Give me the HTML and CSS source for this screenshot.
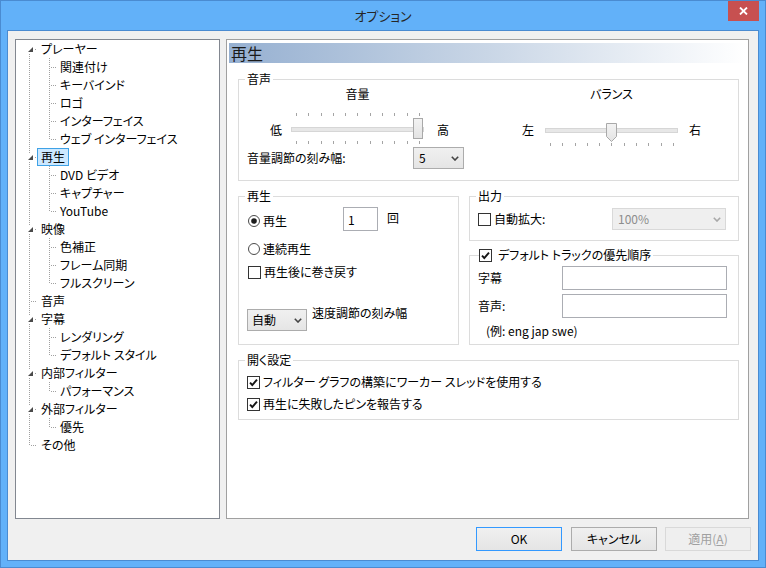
FILE: index.html
```html
<!DOCTYPE html>
<html lang="ja">
<head>
<meta charset="utf-8">
<title>オプション</title>
<link rel="stylesheet" href="styles.css">
</head>
<body>
<div class="window">
  <div class="titlebar">
    <span></span>
    <span class="title">オプション</span>
    <div class="close"><svg width="9" height="8" viewBox="0 0 9 8"><path d="M1 0.5 L8 7.5 M8 0.5 L1 7.5" stroke="#fff" stroke-width="1.8" fill="none"/></svg></div>
  </div>
  <div class="client">
    <div class="main">
      <div class="tree">
        <div class="row"><span class="g1 exp first"><i class="tri"></i></span><span class="lbl">プレーヤー</span></div>
        <div class="row"><span class="g1 v"></span><span class="g2 cmid"></span><span class="lbl">関連付け</span></div>
        <div class="row"><span class="g1 v"></span><span class="g2 cmid"></span><span class="lbl">キーバインド</span></div>
        <div class="row"><span class="g1 v"></span><span class="g2 cmid"></span><span class="lbl">ロゴ</span></div>
        <div class="row"><span class="g1 v"></span><span class="g2 cmid"></span><span class="lbl">インターフェイス</span></div>
        <div class="row"><span class="g1 v"></span><span class="g2 cend"></span><span class="lbl">ウェブ インターフェイス</span></div>
        <div class="row"><span class="g1 exp"><i class="tri"></i></span><span class="lbl sel">再生</span></div>
        <div class="row"><span class="g1 v"></span><span class="g2 cmid"></span><span class="lbl">DVD ビデオ</span></div>
        <div class="row"><span class="g1 v"></span><span class="g2 cmid"></span><span class="lbl">キャプチャー</span></div>
        <div class="row"><span class="g1 v"></span><span class="g2 cend"></span><span class="lbl">YouTube</span></div>
        <div class="row"><span class="g1 exp"><i class="tri"></i></span><span class="lbl">映像</span></div>
        <div class="row"><span class="g1 v"></span><span class="g2 cmid"></span><span class="lbl">色補正</span></div>
        <div class="row"><span class="g1 v"></span><span class="g2 cmid"></span><span class="lbl">フレーム同期</span></div>
        <div class="row"><span class="g1 v"></span><span class="g2 cend"></span><span class="lbl">フルスクリーン</span></div>
        <div class="row"><span class="g1 leaf"></span><span class="lbl">音声</span></div>
        <div class="row"><span class="g1 exp"><i class="tri"></i></span><span class="lbl">字幕</span></div>
        <div class="row"><span class="g1 v"></span><span class="g2 cmid"></span><span class="lbl">レンダリング</span></div>
        <div class="row"><span class="g1 v"></span><span class="g2 cend"></span><span class="lbl">デフォルト スタイル</span></div>
        <div class="row"><span class="g1 exp"><i class="tri"></i></span><span class="lbl">内部フィルター</span></div>
        <div class="row"><span class="g1 v"></span><span class="g2 cend"></span><span class="lbl">パフォーマンス</span></div>
        <div class="row"><span class="g1 exp"><i class="tri"></i></span><span class="lbl">外部フィルター</span></div>
        <div class="row"><span class="g1 v"></span><span class="g2 cend"></span><span class="lbl">優先</span></div>
        <div class="row"><span class="g1 lastleaf"></span><span class="lbl">その他</span></div>
      </div>

      <div class="page">
        <div class="page-head">再生</div>

        <fieldset class="grp audio">
          <legend>音声</legend>
          <div class="sliders">
            <div class="sgroup vol">
              <div class="stitle">音量</div>
              <div class="send lo">低</div>
              <div class="slider">
                <div class="ticks"><i></i><i></i><i></i><i></i><i></i><i></i><i></i><i></i><i></i><i></i><i></i></div>
                <div class="area"><div class="strack"></div><div class="thumb" style="left:122px"></div></div>
                <div class="ticks"><i></i><i></i><i></i><i></i><i></i><i></i><i></i><i></i><i></i><i></i><i></i></div>
              </div>
              <div class="send hi">高</div>
            </div>
            <div class="sgroup bal">
              <div class="stitle">バランス</div>
              <div class="send lo">左</div>
              <div class="slider bslider">
                <div class="area barea"><div class="strack"></div><svg class="pthumb" style="left:61px" width="11" height="19" viewBox="0 0 11 19"><defs><linearGradient id="tg" x1="0" y1="0" x2="0" y2="1"><stop offset="0" stop-color="#f3f3f3"/><stop offset="1" stop-color="#e3e3e3"/></linearGradient></defs><path d="M0.5 0.5 H10.5 V13.5 L5.5 18.5 L0.5 13.5 Z" fill="url(#tg)" stroke="#a9a9a9"/></svg></div>
                <div class="ticks"><i></i><i></i><i></i><i></i><i></i><i></i><i></i><i></i><i></i><i></i><i></i></div>
              </div>
              <div class="send hi">右</div>
            </div>
          </div>
          <div class="step-row">
            <span class="step-label">音量調節の刻み幅:</span>
            <div class="combo step"><span>5</span><svg width="8" height="5" viewBox="0 0 8 5"><path d="M0.8 0.8 L4 4 L7.2 0.8" stroke="#444" stroke-width="1.6" fill="none"/></svg></div>
          </div>
        </fieldset>

        <div class="midgrid">
          <fieldset class="grp play">
            <legend>再生</legend>
            <div class="p-row1">
              <span class="opt radio-first"><svg width="12" height="12" viewBox="0 0 12 12"><circle cx="6" cy="6" r="5.5" fill="#fff" stroke="#4a4a4a"/><circle cx="6" cy="6" r="2.8" fill="#1c1c1c"/></svg>再生</span>
              <input class="edit count" value="1">
              <span class="times">回</span>
            </div>
            <div class="opt p-row2"><svg width="12" height="12" viewBox="0 0 12 12"><circle cx="6" cy="6" r="5.5" fill="#fff" stroke="#4a4a4a"/></svg>連続再生</div>
            <div class="opt p-row3"><svg width="13" height="13" viewBox="0 0 13 13"><rect x="0.5" y="0.5" width="12" height="12" fill="#fff" stroke="#333"/></svg>再生後に巻き戻す</div>
            <div class="p-row4">
              <div class="combo speed"><span>自動</span><svg width="8" height="5" viewBox="0 0 8 5"><path d="M0.8 0.8 L4 4 L7.2 0.8" stroke="#444" stroke-width="1.6" fill="none"/></svg></div>
              <span class="speed-label">速度調節の刻み幅</span>
            </div>
          </fieldset>

          <fieldset class="grp output">
            <legend>出力</legend>
            <div class="o-row">
              <span class="opt"><svg width="13" height="13" viewBox="0 0 13 13"><rect x="0.5" y="0.5" width="12" height="12" fill="#fff" stroke="#333"/></svg>自動拡大:</span>
              <div class="combo zoom disabled"><span>100%</span><svg width="8" height="5" viewBox="0 0 8 5"><path d="M0.8 0.8 L4 4 L7.2 0.8" stroke="#a8a8a8" stroke-width="1.6" fill="none"/></svg></div>
            </div>
          </fieldset>

          <fieldset class="grp trk">
            <legend class="chk-legend"><svg width="13" height="13" viewBox="0 0 13 13"><rect x="0.5" y="0.5" width="12" height="12" fill="#fff" stroke="#333"/><path d="M3 6.6 L5.3 9 L10 3.6" stroke="#151515" stroke-width="1.9" fill="none"/></svg><span>デフォルト トラックの優先順序</span></legend>
            <div class="t-row first"><span class="t-label">字幕</span><input class="edit wide" value=""></div>
            <div class="t-row"><span class="t-label">音声:</span><input class="edit wide" value=""></div>
            <div class="example">(例: eng jap swe)</div>
          </fieldset>
        </div>

        <fieldset class="grp open">
          <legend>開く設定</legend>
          <div class="opt o1"><svg width="13" height="13" viewBox="0 0 13 13"><rect x="0.5" y="0.5" width="12" height="12" fill="#fff" stroke="#333"/><path d="M3 6.6 L5.3 9 L10 3.6" stroke="#151515" stroke-width="1.9" fill="none"/></svg>フィルター グラフの構築にワーカー スレッドを使用する</div>
          <div class="opt o2"><svg width="13" height="13" viewBox="0 0 13 13"><rect x="0.5" y="0.5" width="12" height="12" fill="#fff" stroke="#333"/><path d="M3 6.6 L5.3 9 L10 3.6" stroke="#151515" stroke-width="1.9" fill="none"/></svg>再生に失敗したピンを報告する</div>
        </fieldset>
      </div>
    </div>
    <div class="buttons">
      <button class="btn default">OK</button>
      <button class="btn cancel">キャンセル</button>
      <button class="btn apply" disabled>適用(<u>A</u>)</button>
    </div>
  </div>
</div>
</body>
</html>
```
FILE: styles.css
```css
* { box-sizing: border-box; }
html, body { margin: 0; padding: 0; }
body {
  width: 766px;
  height: 568px;
  overflow: hidden;
  font-family: "Noto Sans CJK JP", "Noto Sans", sans-serif;
  font-size: 12px;
  font-feature-settings: "palt";
  color: #000;
  --dv: repeating-linear-gradient(to bottom, #a0a0a0 0 1px, transparent 1px 2px);
  --dh: repeating-linear-gradient(to right, #a0a0a0 0 1px, transparent 1px 2px);
}

.window {
  width: 766px;
  height: 568px;
  border: 1px solid #4a8bd1;
  background: #62b1f9;
  padding: 0 6px 6px 6px;
  display: flex;
  flex-direction: column;
}

.titlebar {
  height: 29px;
  display: grid;
  grid-template-columns: 1fr auto 1fr;
  align-items: center;
}
.title {
  font-size: 13px;
  color: #262626;
  line-height: 20px;
}
.close {
  justify-self: end;
  align-self: start;
  width: 31px;
  height: 20px;
  background: #c75050;
  display: flex;
  align-items: center;
  justify-content: center;
}

.client {
  flex: 1;
  border: 1px solid #4a8bd1;
  background: #f0f0f0;
  padding: 8px 7px 9px 7px;
  display: flex;
  flex-direction: column;
}

.main {
  height: 480px;
  margin-right: 2px;
  display: flex;
  gap: 6px;
}

/* tree */
.tree {
  width: 205px;
  flex: none;
  border: 1px solid #828790;
  background: #fff;
  padding: 0 0 0 4px;
}
.row {
  display: flex;
  height: 18px;
}
.g1, .g2 { display: block; height: 18px; flex: none; }
.g1 { width: 17px; }
.g2 { width: 19px; }
.g1.v { background: var(--dv) 9px 0 / 1px 18px no-repeat; }
.g1.leaf {
  background: var(--dv) 9px 0 / 1px 18px no-repeat,
              var(--dh) 11px 9px / 6px 1px no-repeat;
}
.g1.lastleaf {
  background: var(--dv) 9px 0 / 1px 10px no-repeat,
              var(--dh) 11px 9px / 6px 1px no-repeat;
}
.g1.exp {
  background: var(--dv) 9px 0 / 1px 5px no-repeat,
              var(--dv) 9px 14px / 1px 4px no-repeat,
              var(--dh) 15px 9px / 2px 1px no-repeat;
}
.g1.exp.first {
  background: var(--dv) 9px 14px / 1px 4px no-repeat,
              var(--dh) 15px 9px / 2px 1px no-repeat;
}
.g2.cmid {
  background: var(--dv) 12px 0 / 1px 18px no-repeat,
              var(--dh) 14px 9px / 5px 1px no-repeat;
}
.g2.cend {
  background: var(--dv) 12px 0 / 1px 10px no-repeat,
              var(--dh) 14px 9px / 5px 1px no-repeat;
}
.tri {
  display: block;
  width: 0;
  height: 0;
  margin: 7px 0 0 8px;
  border-left: 5px solid transparent;
  border-bottom: 5px solid #4a4a4a;
}
.lbl {
  display: block;
  height: 18px;
  line-height: 16px;
  padding: 0 3px;
  border: 1px solid transparent;
  white-space: nowrap;
}
.lbl.sel {
  background: #cce8ff;
  border-color: #3fa2e6;
}

/* page */
.page {
  flex: 1;
  border: 1px solid #a0a0a0;
  background: #fff;
  display: flex;
  flex-direction: column;
}
.page-head {
  margin: 3px 2px 0 2px;
  height: 20px;
  padding-left: 2px;
  font-size: 16px;
  line-height: 20px;
  color: #1a1a1a;
  background: linear-gradient(to right, #96b0d1 0%, #c9d6e6 50%, #ffffff 100%);
}

.grp {
  margin: 0;
  padding: 0;
  min-width: 0;
  border: 1px solid #dcdcdc;
}
.grp > legend {
  padding: 0 2px;
  margin-left: 6px;
  line-height: 16px;
  font-size: 12px;
}

/* audio */
.audio {
  margin: 8px 9px 0 11px;
  padding-bottom: 11px;
}
.sliders {
  display: flex;
  margin-left: 31px;
}
.sgroup {
  display: grid;
  grid-template-rows: 14px 33px;
  row-gap: 12px;
}
.sgroup.vol { grid-template-columns: 21px 133px 25px; }
.sgroup.bal { grid-template-columns: 23px 133px 23px; margin-left: 73px; }
.stitle {
  grid-column: 2;
  grid-row: 1;
  text-align: center;
  line-height: 14px;
}
.send {
  grid-row: 2;
  line-height: 14px;
  margin-top: 10px;
}
.send.lo { grid-column: 1; }
.send.hi { grid-column: 3; }
.sgroup.vol .send.hi { padding-left: 13px; }
.sgroup.bal .send.hi { padding-left: 11px; }
.slider {
  grid-column: 2;
  grid-row: 2;
  display: flex;
  flex-direction: column;
}
.ticks {
  height: 3px;
  display: flex;
  justify-content: space-between;
  padding: 0 4px 0 5px;
}
.ticks i {
  display: block;
  width: 1px;
  height: 3px;
  background: #a4a4a4;
}
.area {
  position: relative;
  height: 23px;
  margin: 1px 0;
}
.strack {
  margin-top: 10px;
  height: 5px;
  border: 1px solid #d6d6d6;
  background: #e7e7e7;
}
.thumb {
  position: absolute;
  top: 1px;
  width: 10px;
  height: 21px;
  border: 1px solid #a9a9a9;
  background: linear-gradient(#f3f3f3, #e3e3e3);
}
.bslider { padding-top: 9px; }
.barea { height: 21px; margin: 0; }
.barea .strack { margin-top: 6px; }
.pthumb {
  position: absolute;
  top: 1px;
  display: block;
}

.step-row {
  display: flex;
  align-items: center;
  margin-top: 1px;
}
.step-label {
  margin-left: 8px;
  width: 166px;
  line-height: 16px;
}

.combo {
  height: 22px;
  border: 1px solid #acacac;
  background: linear-gradient(#f0f0f0, #e5e5e5);
  display: flex;
  align-items: center;
  justify-content: space-between;
  padding: 0 4px 0 5px;
  line-height: 16px;
}
.combo svg { display: block; }
.combo.step { width: 51px; }
.combo.speed { width: 60px; padding-left: 4px; margin-left: 8px; margin-top: 3px; }
.combo.zoom { width: 114px; margin-left: auto; margin-right: 12px; }
.combo.disabled {
  background: #efefef;
  border-color: #d9d9d9;
  color: #8d8d8d;
}

/* middle groups */
.midgrid {
  display: grid;
  grid-template-columns: 221px 270px;
  grid-template-rows: auto auto;
  column-gap: 10px;
  row-gap: 6px;
  margin: 7px 9px 0 11px;
}
.play { grid-column: 1; grid-row: 1 / span 2; }
.output { grid-column: 2; grid-row: 1; padding-bottom: 10px; }
.trk { grid-column: 2; grid-row: 2; padding-bottom: 5px; }

.opt {
  display: flex;
  align-items: center;
  gap: 3px;
  line-height: 16px;
  white-space: nowrap;
}
.opt svg { display: block; flex: none; }

.p-row1 {
  display: flex;
  align-items: flex-start;
  margin: 3px 0 0 9px;
}
.radio-first { width: 95px; margin-top: 6px; }
.edit {
  height: 24px;
  border: 1px solid #abadb3;
  padding: 0 4px;
  font: inherit;
  font-feature-settings: "palt";
  color: #000;
  background: #fff;
  outline: none;
  margin: 0;
}
.edit.count { width: 35px; flex: none; }
.times { margin: 3px 0 0 9px; line-height: 16px; }
.p-row2 { margin: 10px 0 0 9px; }
.p-row3 { margin: 7px 0 0 9px; }
.p-row4 {
  display: flex;
  align-items: flex-start;
  margin-top: 26px;
}
.speed-label { margin-left: 5px; line-height: 14px; white-space: nowrap; }

.o-row {
  display: flex;
  align-items: center;
  margin: 4px 0 0 8px;
}

.grp > legend.chk-legend {
  margin-left: 9px;
  padding: 0 2px 0 0;
  display: flex;
  align-items: center;
  gap: 6px;
}
.chk-legend svg { display: block; }
.t-row {
  display: flex;
  align-items: center;
  margin: 4px 0 0 8px;
}
.t-row.first { margin-top: 3px; }
.t-label { width: 84px; line-height: 16px; }
.edit.wide { width: 165px; }
.example { margin: 5px 0 0 16px; line-height: 16px; }

/* open settings */
.open {
  margin: 7px 9px 0 11px;
  padding-bottom: 7px;
}
.o1 { margin: 6px 0 0 8px; }
.o2 { margin: 6px 0 0 8px; }

/* buttons */
.buttons {
  display: flex;
  justify-content: flex-end;
  margin-top: 8px;
  height: 24px;
}
.btn {
  width: 86px;
  height: 24px;
  margin: 0;
  padding: 0;
  font: inherit;
  font-feature-settings: "palt";
  color: #000;
  border: 1px solid #acacac;
  background: linear-gradient(#f0f0f0, #e5e5e5);
  line-height: 16px;
}
.btn.default { border-color: #3399ff; }
.btn.cancel { margin-left: 9px; }
.btn.apply {
  margin-left: 8px;
  color: #a0a0a0;
  border-color: #d9d9d9;
  background: #efefef;
}
```
